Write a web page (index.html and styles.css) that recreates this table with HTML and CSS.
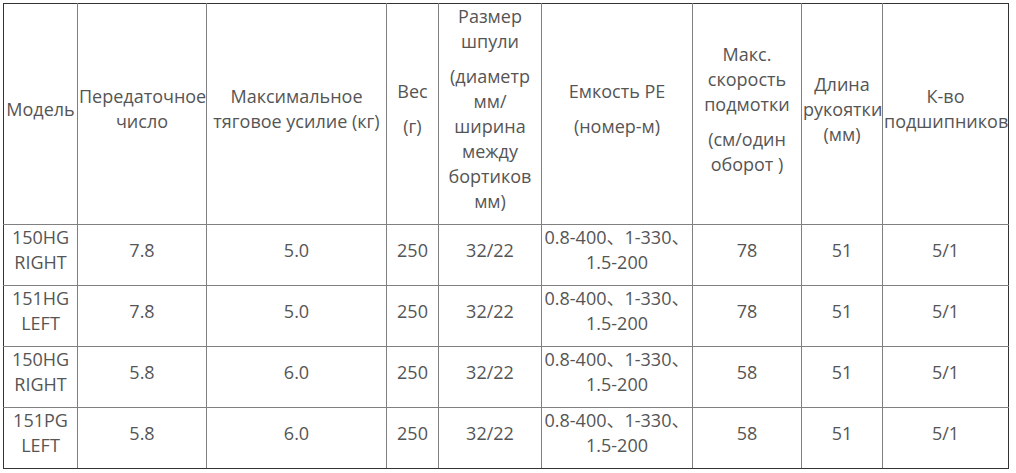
FILE: index.html
```html
<!DOCTYPE html>
<html lang="ru">
<head>
<meta charset="utf-8">
<title>Характеристики</title>
<link rel="stylesheet" href="styles.css">
</head>
<body>
<div class="wrap">
<table class="spec">
  <colgroup>
    <col class="c1"><col class="c2"><col class="c3"><col class="c4"><col class="c5"><col class="c6"><col class="c7"><col class="c8"><col class="c9">
  </colgroup>
  <tr>
    <td><p>Модель</p></td>
    <td><p>Передаточное число</p></td>
    <td><p>Максимальное тяговое усилие (кг)</p></td>
    <td><p>Вес</p><p>(г)</p></td>
    <td><p>Размер шпули</p><p>(диаметр мм/ ширина между бортиков мм)</p></td>
    <td><p>Емкость PE</p><p>(номер-м)</p></td>
    <td><p>Макс. скорость подмотки</p><p>(см/один оборот )</p></td>
    <td><p>Длина рукоятки (мм)</p></td>
    <td><p>К-во подшипников</p></td>
  </tr>
  <tr>
    <td><p>150HG RIGHT</p></td>
    <td><p>7.8</p></td>
    <td><p>5.0</p></td>
    <td><p>250</p></td>
    <td><p>32/22</p></td>
    <td><p>0.8-400、1-330、1.5-200</p></td>
    <td><p>78</p></td>
    <td><p>51</p></td>
    <td><p>5/1</p></td>
  </tr>
  <tr>
    <td><p>151HG LEFT</p></td>
    <td><p>7.8</p></td>
    <td><p>5.0</p></td>
    <td><p>250</p></td>
    <td><p>32/22</p></td>
    <td><p>0.8-400、1-330、1.5-200</p></td>
    <td><p>78</p></td>
    <td><p>51</p></td>
    <td><p>5/1</p></td>
  </tr>
  <tr>
    <td><p>150HG RIGHT</p></td>
    <td><p>5.8</p></td>
    <td><p>6.0</p></td>
    <td><p>250</p></td>
    <td><p>32/22</p></td>
    <td><p>0.8-400、1-330、1.5-200</p></td>
    <td><p>58</p></td>
    <td><p>51</p></td>
    <td><p>5/1</p></td>
  </tr>
  <tr>
    <td><p>151PG LEFT</p></td>
    <td><p>5.8</p></td>
    <td><p>6.0</p></td>
    <td><p>250</p></td>
    <td><p>32/22</p></td>
    <td><p>0.8-400、1-330、1.5-200</p></td>
    <td><p>58</p></td>
    <td><p>51</p></td>
    <td><p>5/1</p></td>
  </tr>
</table>
</div>
</body>
</html>
```
FILE: styles.css
```css
html, body {
  margin: 0;
  padding: 0;
  background: #fff;
}
.wrap {
  padding: 3px 0 0 3px;
}
.spec {
  border-collapse: collapse;
  table-layout: fixed;
  width: 1006px;
  font-family: "Open Sans", "Noto Sans CJK SC", sans-serif;
  font-size: 18px;
  line-height: 25px;
  color: #555;
  border: 1px solid #333;
}
.c1 { width: 74px; }
.c2 { width: 129px; }
.c3 { width: 180px; }
.c4 { width: 52px; }
.c5 { width: 103px; }
.c6 { width: 151px; }
.c7 { width: 109px; }
.c8 { width: 81px; }
.c9 { width: 126px; }
.spec td {
  border: 1px solid #808080;
  padding: 0 1px;
  text-align: center;
  vertical-align: middle;
}
.spec tr:first-child td { border-top-color: #333; }
.spec tr:last-child td { border-bottom-color: #333; }
.spec td:first-child { border-left-color: #333; }
.spec td:last-child { border-right-color: #333; }
.spec p {
  margin: 0 0 10px;
}
```
